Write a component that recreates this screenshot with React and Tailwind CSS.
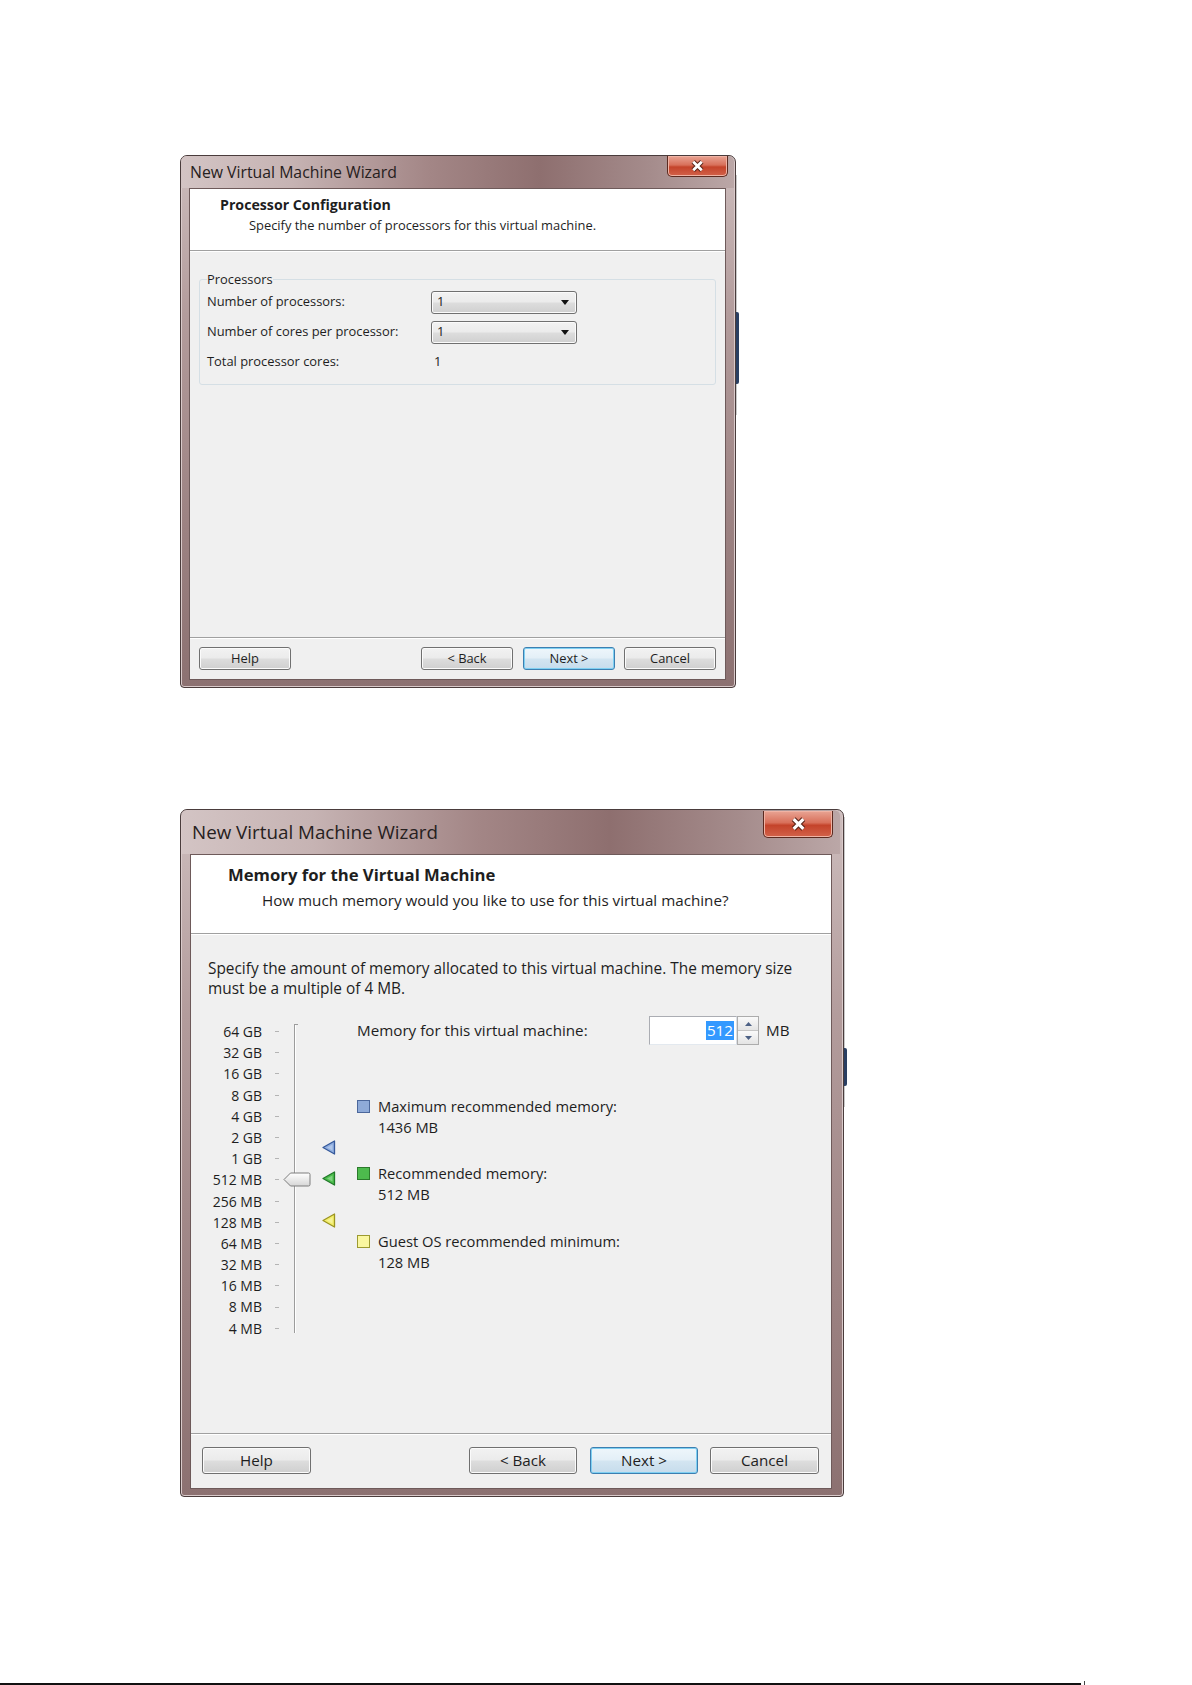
import React from 'react';

// Win7 "basic" style wizard windows, two pages of the New VM wizard
const ui = "font-['Open_Sans','Noto_Sans',sans-serif] text-[#1e1e1e]";

const sizes = {
  sm: {
    frame: 'w-[556px] h-[533px] pl-[8px] pr-[9px] pb-[7px]',
    bar: 'h-[32px]',
    title: 'text-[15.8px] pt-[5px] pl-[1px]',
    close: 'w-[61px] h-[21px] mr-[-2px]',
    glyph: [15, 12],
  },
  lg: {
    frame: 'w-[664px] h-[688px] pl-[9px] pr-[11px] pb-[7px]',
    bar: 'h-[44px]',
    title: 'text-[18.8px] pt-[8px] pl-[2px]',
    close: 'w-[70px] h-[27px] mr-[-1px] mt-[1px]',
    glyph: [17, 14],
  },
};

const CloseGlyph = ({ w, h }) => (
  <svg width={w} height={h} viewBox="0 0 14 11">
    <path d="M3 1.5 L11 9.5 M11 1.5 L3 9.5" stroke="#5a2418" strokeWidth="4.4" />
    <path d="M3 1.5 L11 9.5 M11 1.5 L3 9.5" stroke="#ffffff" strokeWidth="2.6" />
  </svg>
);

function WizardWindow({ size, children }) {
  const s = sizes[size];
  return (
    <div
      className={`${s.frame} flex flex-col rounded-t-[7px] rounded-b-[4px] border border-[#4a3c3c] bg-[linear-gradient(180deg,#cdbdbd_0%,#b39c9c_30%,#9c8282_70%,#8c7171_100%)] shadow-[inset_0_0_0_1px_#d9caca]`}
    >
      <div
        className={`${s.bar} -mx-[8px] px-[8px] flex items-start justify-between bg-[linear-gradient(90deg,#d3c4c4_0%,#c6b3b3_20%,#a38686_45%,#8e6f6f_65%,#a58c8c_85%,#bba7a7_100%)] rounded-t-[6px]`}
      >
        <div className={`${s.title} text-[#262020] font-['Open_Sans',sans-serif]`}>New Virtual Machine Wizard</div>
        <div
          className={`${s.close} flex items-center justify-center rounded-b-[5px] border border-t-0 border-[#5b2a20] bg-[linear-gradient(180deg,#e9a494_0%,#d8705a_45%,#c4432a_55%,#d2624a_100%)] shadow-[inset_0_0_0_1px_#f0b3a4]`}
        >
          <CloseGlyph w={s.glyph[0]} h={s.glyph[1]} />
        </div>
      </div>
      <div className="flex-1 flex flex-col border border-[#6e5a5a] bg-[#f0f0f0]">{children}</div>
    </div>
  );
}

function Btn({ label, primary, cls }) {
  const look = primary
    ? 'border-[#3c7fb1] bg-[linear-gradient(180deg,#eef6fb_0%,#e3eff7_48%,#d3e5f1_52%,#c6dcec_100%)] shadow-[inset_0_0_0_1px_#7fd0f2]'
    : 'border-[#707070] bg-[linear-gradient(180deg,#f2f2f2_0%,#ebebeb_48%,#dddddd_52%,#cfcfcf_100%)] shadow-[inset_0_0_0_1px_#fbfbfb]';
  return (
    <div className={`${cls} ${look} flex items-center justify-center rounded-[3px] border`}>{label}</div>
  );
}

function Dropdown({ value }) {
  return (
    <div className="w-[146px] h-[23px] flex items-center justify-between pl-[5px] pr-[7px] rounded-[3px] border border-[#707070] bg-[linear-gradient(180deg,#f2f2f2_0%,#ebebeb_48%,#dddddd_52%,#cfcfcf_100%)] shadow-[inset_0_0_0_1px_#fbfbfb]">
      <span>{value}</span>
      <svg width="8" height="5" viewBox="0 0 8 5">
        <path d="M0 0 H8 L4 5 Z" fill="#111" />
      </svg>
    </div>
  );
}

// window edge of whatever sits behind the dialog
function BackdropEdge({ cls, top, mark }) {
  return (
    <div className={`${cls} flex flex-col w-[4px]`}>
      <div className={`${top} w-px bg-[#c9c9c9]`} />
      <div className={`${mark} w-[3px] bg-[#2a3f62] rounded-r-[2px]`} />
      <div className="w-px flex-1 bg-[#c9c9c9]" />
    </div>
  );
}

function ProcessorPage() {
  const rows = [
    ['Number of processors:', <Dropdown value="1" />],
    ['Number of cores per processor:', <Dropdown value="1" />],
    ['Total processor cores:', <span className="pl-[3px]">1</span>],
  ];
  return (
    <WizardWindow size="sm">
      <div className={`${ui} flex-1 flex flex-col text-[12.9px]`}>
        <div className="h-[62px] bg-white border-b border-[#a0a0a0] pt-[8px] shadow-[0_1px_0_#ffffff]">
          <div className="pl-[30px] font-bold text-[14.2px] leading-[16px]">Processor Configuration</div>
          <div className="pl-[59px] mt-[4px] leading-[16px]">Specify the number of processors for this virtual machine.</div>
        </div>
        <div className="flex-1 px-[9px] pt-[20px]">
          <fieldset className="border border-[#d5dfe5] rounded-[3px] px-[7px] pb-[7px]">
            <legend className="px-0 leading-[16px]">Processors</legend>
            {rows.map(([label, ctrl]) => (
              <div key={label} className="h-[30px] flex items-center">
                <div className="w-[224px]">{label}</div>
                {ctrl}
              </div>
            ))}
          </fieldset>
        </div>
        <div className="h-[42px] border-t border-[#a0a0a0] shadow-[inset_0_1px_0_#ffffff] pt-[9px] px-[9px] flex items-start">
          <Btn label="Help" cls="w-[92px] h-[23px]" />
          <Btn label="< Back" cls="w-[92px] h-[23px] ml-[130px]" />
          <Btn label="Next >" primary cls="w-[92px] h-[23px] ml-[10px]" />
          <Btn label="Cancel" cls="w-[92px] h-[23px] ml-[9px]" />
        </div>
      </div>
    </WizardWindow>
  );
}

const scale = ['64 GB', '32 GB', '16 GB', '8 GB', '4 GB', '2 GB', '1 GB', '512 MB', '256 MB', '128 MB', '64 MB', '32 MB', '16 MB', '8 MB', '4 MB'];

const Marker = ({ fill, stroke, cls }) => (
  <svg className={`absolute ${cls}`} width="14" height="15" viewBox="0 0 14 15">
    <path d="M1 7.5 L12.5 1 V14 Z" fill={fill} stroke={stroke} strokeWidth="1.3" strokeLinejoin="round" />
    <path d="M5 7.5 L10.5 4.6 V10.4 Z" fill="#ffffff" opacity="0.3" />
  </svg>
);

function LegendItem({ swatch, label, value, cls }) {
  return (
    <div className={`${cls} flex items-start`}>
      <div className={`${swatch} w-[13px] h-[13px] mt-[4px] border`} />
      <div className="ml-[8px] leading-[21px] text-[14.7px]">
        <div>{label}</div>
        <div>{value}</div>
      </div>
    </div>
  );
}

function MemoryPage() {
  return (
    <WizardWindow size="lg">
      <div className={`${ui} flex-1 flex flex-col text-[15.2px]`}>
        <div className="h-[79px] bg-white border-b border-[#a0a0a0] pt-[10px] shadow-[0_1px_0_#ffffff]">
          <div className="pl-[37px] font-bold text-[16.7px] leading-[20px]">Memory for the Virtual Machine</div>
          <div className="pl-[71px] mt-[5px] leading-[20px]">How much memory would you like to use for this virtual machine?</div>
        </div>
        <div className="flex-1 pl-[17px] pt-[25px]">
          <p className="leading-[20px] text-[15.4px]">
            Specify the amount of memory allocated to this virtual machine. The memory size
            <br />
            must be a multiple of 4 MB.
          </p>
          <div className="mt-[17px] flex items-start">
            {/* vertical memory slider */}
            <div className="w-[149px] pt-[5px] flex text-[14px]">
              <div className="w-[54px] text-right">
                {scale.map((s) => (
                  <div key={s} className="h-[21.2px] leading-[21.2px]">{s}</div>
                ))}
              </div>
              <div className="ml-[13px] w-[4px]">
                {scale.map((s) => (
                  <div key={s} className="h-[21.2px] flex items-center">
                    <div className="w-[4px] h-px bg-[#b4b4b4]" />
                  </div>
                ))}
              </div>
              <div className="relative ml-[15px] w-[2px]">
                <div className="absolute left-0 top-[3px] bottom-[6px] w-px bg-[#9c9c9c]" />
                <div className="absolute left-px top-[3px] bottom-[6px] w-px bg-[#ffffff]" />
                <div className="absolute left-0 top-[3px] w-[4px] h-px bg-[#9c9c9c]" />
                <svg className="absolute left-[-11px] top-[151px]" width="28" height="15" viewBox="0 0 28 15">
                  <defs>
                    <linearGradient id="thumbFill" x1="0" y1="0" x2="0" y2="1">
                      <stop offset="0" stopColor="#ffffff" />
                      <stop offset="1" stopColor="#d6d6d6" />
                    </linearGradient>
                  </defs>
                  <path d="M1 7.5 L7.5 1 H25.5 Q27 1 27 2.5 V12.5 Q27 14 25.5 14 H7.5 Z" fill="url(#thumbFill)" stroke="#7c7c7c" />
                </svg>
                <Marker fill="#8faee0" stroke="#35589a" cls="left-[28px] top-[119px]" />
                <Marker fill="#4cbf4c" stroke="#22782a" cls="left-[28px] top-[150px]" />
                <Marker fill="#f3ee6a" stroke="#9b9420" cls="left-[28px] top-[192px]" />
              </div>
            </div>
            <div className="flex flex-col">
              <div className="h-[29px] flex items-center">
                <div className="w-[292px]">Memory for this virtual machine:</div>
                <div className="w-[88px] h-[29px] border border-[#abadb3] border-b-[#e3e9ef] border-r-[#dbdfe6] bg-white flex items-center justify-end pr-[2px]">
                  <span className="bg-[#3399ff] text-white leading-[19px] px-px">512</span>
                </div>
                <div className="w-[22px] h-[29px] flex flex-col border border-[#acacac] bg-[#f4f4f4]">
                  <div className="flex-1 flex items-center justify-center border-b border-[#c6c6c6] bg-[linear-gradient(180deg,#fafafa,#e4e4e4)]">
                    <svg width="7" height="4" viewBox="0 0 7 4"><path d="M0 4 L3.5 0 L7 4 Z" fill="#4d6185" /></svg>
                  </div>
                  <div className="flex-1 flex items-center justify-center bg-[linear-gradient(180deg,#fafafa,#e4e4e4)]">
                    <svg width="7" height="4" viewBox="0 0 7 4"><path d="M0 0 L3.5 4 L7 0 Z" fill="#4d6185" /></svg>
                  </div>
                </div>
                <div className="ml-[7px]">MB</div>
              </div>
              <LegendItem cls="mt-[51px]" swatch="bg-[#8eaad8] border-[#4b679b]" label="Maximum recommended memory:" value="1436 MB" />
              <LegendItem cls="mt-[25px]" swatch="bg-[#4dbb4d] border-[#2b7a2b]" label="Recommended memory:" value="512 MB" />
              <LegendItem cls="mt-[26px]" swatch="bg-[#faf7a0] border-[#9c9a30]" label="Guest OS recommended minimum:" value="128 MB" />
            </div>
          </div>
        </div>
        <div className="h-[55px] border-t border-[#a0a0a0] shadow-[inset_0_1px_0_#ffffff] pt-[13px] pl-[11px] flex items-start">
          <Btn label="Help" cls="w-[109px] h-[27px]" />
          <Btn label="< Back" cls="w-[108px] h-[27px] ml-[158px]" />
          <Btn label="Next >" primary cls="w-[108px] h-[27px] ml-[13px]" />
          <Btn label="Cancel" cls="w-[109px] h-[27px] ml-[12px]" />
        </div>
      </div>
    </WizardWindow>
  );
}

export default function App() {
  return (
    <div className="w-[1192px] h-[1685px] bg-white overflow-hidden">
      <div className="pt-[155px] pl-[180px]">
        <div className="flex items-start">
          <ProcessorPage />
          <BackdropEdge cls="h-[260px] pt-[20px]" top="h-[137px]" mark="h-[72px]" />
        </div>
        <div className="mt-[121px] flex items-start">
          <MemoryPage />
          <BackdropEdge cls="h-[298px] pt-[8px]" top="h-[231px]" mark="h-[38px]" />
        </div>
      </div>
      <div className="mt-[184px] flex items-end">
        <div className="w-[1081px] h-[2px] bg-[#111]" />
        <div className="ml-[3px] w-px h-[4px] bg-[#444]" />
      </div>
    </div>
  );
}
